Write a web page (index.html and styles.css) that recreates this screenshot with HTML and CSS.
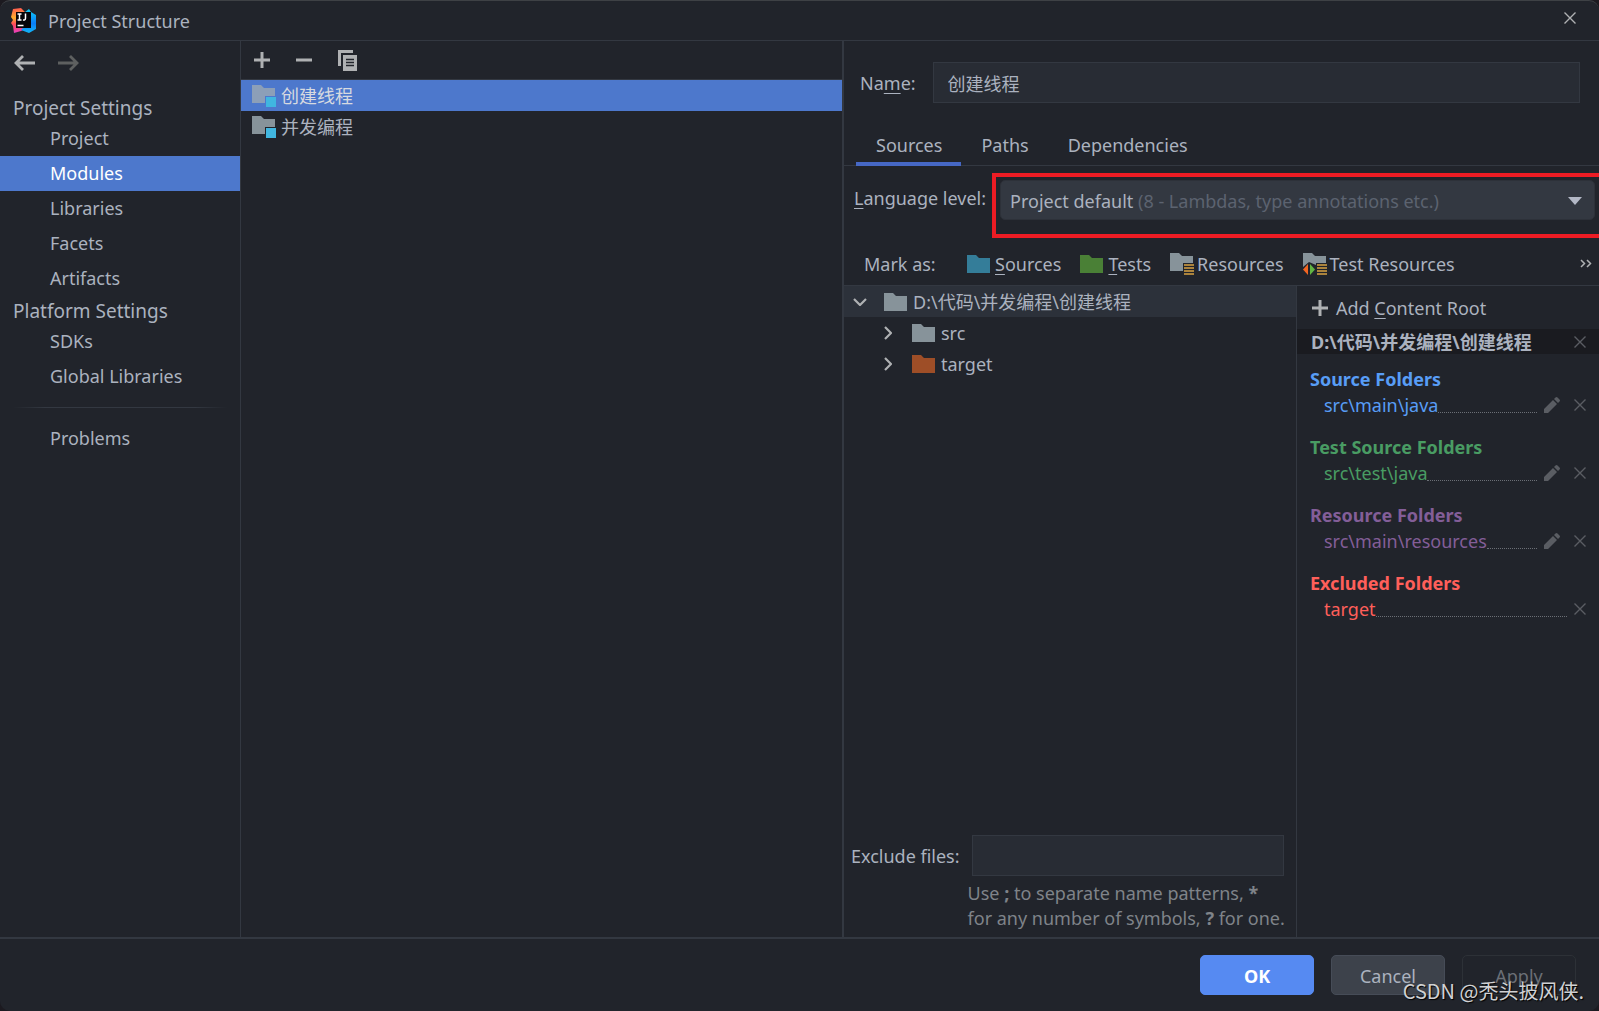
FILE: index.html
```html
<!DOCTYPE html>
<html lang="en">
<head>
<meta charset="utf-8">
<title>Project Structure</title>
<link rel="stylesheet" href="styles.css">
</head>
<body>
<svg class="defs" aria-hidden="true">
  <symbol id="folder" viewBox="0 0 23 18"><path d="M0 0H9L12 3H23V18H0Z" fill="currentColor"/></symbol>
  <symbol id="cross" viewBox="0 0 12 12"><path d="M.5 .5L11.500 11.500M11.500 .5L.5 11.500" stroke="currentColor" stroke-width="1.400" fill="none"/></symbol>
  <symbol id="plus" viewBox="0 0 16 16"><path d="M8 0V16M0 8H16" stroke="currentColor" stroke-width="3" fill="none"/></symbol>
  <symbol id="pencil" viewBox="0 0 16 16"><path d="M0 12L9 3L13 7L4 16H0ZM10 2L11.500 .5Q12.500 -.5 13.500 .5L15.500 2.500Q16.500 3.500 15.500 4.500L14 6Z" fill="currentColor"/></symbol>
  <symbol id="chevron" viewBox="0 0 8 14"><path d="M1 1L7 7L1 13" stroke="currentColor" stroke-width="2.200" fill="none"/></symbol>
  <symbol id="module" viewBox="0 0 24 22"><path d="M0 0H9L12 3H23V11H13V18H0Z" fill="currentColor"/><path d="M14 12H24V22H14Z" fill="#40b6e0"/></symbol>
</svg>
<div class="dialog">
  <header class="titlebar">
    <svg class="logo" viewBox="0 0 26 26" aria-hidden="true">
      <defs>
        <linearGradient id="warm" x1="0" y1="0" x2="0" y2="1"><stop offset="0" stop-color="#ff5a4f"/><stop offset=".4" stop-color="#fdb02c"/><stop offset=".65" stop-color="#fb4a5c"/><stop offset="1" stop-color="#e93fc0"/></linearGradient>
        <linearGradient id="cool" x1="0" y1="0" x2="0" y2="1"><stop offset="0" stop-color="#10d0f5"/><stop offset=".6" stop-color="#0a7dfa"/><stop offset="1" stop-color="#12b7f5"/></linearGradient>
      </defs>
      <path d="M2 1L10 0L16 6V20L10 23L3 25L2 18L0 15L2 12L0 9Z" fill="url(#warm)"/>
      <path d="M14 4L18 1L20 4L25 7L25 21L18 25L10 22L14 18Z" fill="url(#cool)"/>
      <path d="M5 4H20V20H5Z" fill="#050509"/>
      <path d="M6.500 6H10.500M8.500 6V12M6.500 12H10.500M12 12Q14.500 12.500 14.500 10V5.500M6.500 17.500H12.500" stroke="#fff" stroke-width="1.500" fill="none"/>
    </svg>
    <h1 class="title">Project Structure</h1>
    <button class="icon-button close" aria-label="Close"><svg class="cross"><use href="#cross"/></svg></button>
  </header>
  <main class="content">
    <nav class="sidebar">
      <div class="history">
        <button class="icon-button" aria-label="Back"><svg class="arrow" viewBox="0 0 21 16"><path d="M9 1L2 8L9 15M2 8H21" stroke="currentColor" stroke-width="2.800" fill="none"/></svg></button>
        <button class="icon-button" aria-label="Forward" disabled><svg class="arrow" viewBox="0 0 21 16"><path d="M12 1L19 8L12 15M19 8H0" stroke="currentColor" stroke-width="2.800" fill="none"/></svg></button>
      </div>
      <h2 class="group">Project Settings</h2>
      <a class="nav-item" href="#">Project</a>
      <a class="nav-item selected" href="#">Modules</a>
      <a class="nav-item" href="#">Libraries</a>
      <a class="nav-item" href="#">Facets</a>
      <a class="nav-item" href="#">Artifacts</a>
      <h2 class="group">Platform Settings</h2>
      <a class="nav-item" href="#">SDKs</a>
      <a class="nav-item" href="#">Global Libraries</a>
      <hr class="separator">
      <a class="nav-item" href="#">Problems</a>
    </nav>
    <section class="modules">
      <div class="toolbar">
        <button class="icon-button" aria-label="Add"><svg class="plus"><use href="#plus"/></svg></button>
        <button class="icon-button" aria-label="Remove"><svg class="plus" viewBox="0 0 16 16"><path d="M0 8H16" stroke="currentColor" stroke-width="3"/></svg></button>
        <button class="icon-button" aria-label="Copy"><svg class="copy" viewBox="0 0 20 21"><path d="M0 0H15V3H3V16H0Z" fill="currentColor"/><path d="M5 5H19V21H5Z" fill="currentColor"/><path d="M8 9.500H16M8 12.500H16M8 15.500H16" stroke="#21242b" stroke-width="1.300"/></svg></button>
      </div>
      <ul class="module-list">
        <li class="module selected"><svg class="module-icon"><use href="#module"/></svg>创建线程</li>
        <li class="module"><svg class="module-icon"><use href="#module"/></svg>并发编程</li>
      </ul>
    </section>
    <section class="editor">
      <div class="name-row">
        <label for="name">Na<u>m</u>e:</label>
        <input class="field" id="name" type="text" value="创建线程">
      </div>
      <div class="tabs" role="tablist">
        <button class="tab active" role="tab" aria-selected="true">Sources</button>
        <button class="tab" role="tab">Paths</button>
        <button class="tab" role="tab">Dependencies</button>
      </div>
      <div class="level-row">
        <label for="level"><u>L</u>anguage level:</label>
        <div class="highlight">
          <div class="combo">
            <select id="level"><button><selectedcontent></selectedcontent></button><option>Project default <span class="hint">(8 - Lambdas, type annotations etc.)</span></option></select>
          </div>
        </div>
      </div>
      <div class="mark-row">
        <span class="mark-label">Mark as:</span>
        <button class="mark"><svg class="folder blue"><use href="#folder"/></svg><span><u>S</u>ources</span></button>
        <button class="mark"><svg class="folder green"><use href="#folder"/></svg><span><u>T</u>ests</span></button>
        <button class="mark tight"><svg class="mark-icon" viewBox="0 0 24 22"><path d="M0 0H9L12 3H23V10H13V18H0Z" fill="#87939a"/><path d="M14 12H24M14 15H24M14 18H24M14 21H24" stroke="#d9a343" stroke-width="1.600"/></svg><span>Resources</span></button>
        <button class="mark tight"><svg class="mark-icon" viewBox="0 0 24 22"><path d="M0 0H9L12 3H23V10H13V12L6 9L0 14Z" fill="#87939a"/><path d="M5 11V22L0 16.500Z" fill="#f26522"/><path d="M7 11V22L12 16.500Z" fill="#62b543"/><path d="M14 12H24M14 15H24M14 18H24M14 21H24" stroke="#d9a343" stroke-width="1.600"/></svg><span>Test Resources</span></button>
        <button class="icon-button more" aria-label="More"><svg class="more-icon" viewBox="0 0 12 9"><path d="M1 1L4.500 4.500L1 8M7 1L10.500 4.500L7 8" stroke="currentColor" stroke-width="1.500" fill="none"/></svg></button>
      </div>
      <div class="split">
        <div class="tree-pane">
          <ul class="tree">
            <li class="node root"><svg class="chevron open"><use href="#chevron"/></svg><svg class="folder"><use href="#folder"/></svg>D:\代码\并发编程\创建线程</li>
            <li class="node"><svg class="chevron"><use href="#chevron"/></svg><svg class="folder"><use href="#folder"/></svg>src</li>
            <li class="node"><svg class="chevron"><use href="#chevron"/></svg><svg class="folder rust"><use href="#folder"/></svg>target</li>
          </ul>
          <div class="exclude">
            <label for="exclude">Exclude files:</label>
            <input class="field" id="exclude" type="text">
            <p class="help">Use <b>;</b> to separate name patterns, <b>*</b><br>for any number of symbols, <b>?</b> for one.</p>
          </div>
        </div>
        <aside class="roots">
          <button class="add-root"><svg class="plus"><use href="#plus"/></svg><span>Add <u>C</u>ontent Root</span></button>
          <div class="root-path"><strong>D:\代码\并发编程\创建线程</strong><button class="icon-button" aria-label="Remove root"><svg class="cross"><use href="#cross"/></svg></button></div>
          <section class="folders sources">
            <h3>Source Folders</h3>
            <div class="entry"><span>src\main\java</span><i class="leader"></i><button class="icon-button" aria-label="Edit"><svg class="pencil"><use href="#pencil"/></svg></button><button class="icon-button" aria-label="Remove"><svg class="cross"><use href="#cross"/></svg></button></div>
          </section>
          <section class="folders tests">
            <h3>Test Source Folders</h3>
            <div class="entry"><span>src\test\java</span><i class="leader"></i><button class="icon-button" aria-label="Edit"><svg class="pencil"><use href="#pencil"/></svg></button><button class="icon-button" aria-label="Remove"><svg class="cross"><use href="#cross"/></svg></button></div>
          </section>
          <section class="folders resources">
            <h3>Resource Folders</h3>
            <div class="entry"><span>src\main\resources</span><i class="leader"></i><button class="icon-button" aria-label="Edit"><svg class="pencil"><use href="#pencil"/></svg></button><button class="icon-button" aria-label="Remove"><svg class="cross"><use href="#cross"/></svg></button></div>
          </section>
          <section class="folders excluded">
            <h3>Excluded Folders</h3>
            <div class="entry"><span>target</span><i class="leader"></i><button class="icon-button" aria-label="Remove"><svg class="cross"><use href="#cross"/></svg></button></div>
          </section>
        </aside>
      </div>
    </section>
  </main>
  <footer class="footer">
    <button class="button primary">OK</button>
    <button class="button">Cancel</button>
    <button class="button" disabled>Apply</button>
    <span class="watermark">CSDN @秃头披风侠.</span>
  </footer>
</div>
</body>
</html>
```
FILE: styles.css
```css
* { box-sizing: border-box; }

:root {
  --bg: #21242b;
  --line: #333841;
  --text: #abb2bf;
  --select: #4d78cc;
}

body {
  margin: 0;
  background: #1c1a20;
  color: var(--text);
  font: 18px/24px "Noto Sans", "Noto Sans CJK SC", sans-serif;
}

h1, h2, h3, p, ul { margin: 0; padding: 0; font-size: inherit; font-weight: 400; }
ul { list-style: none; }
a { color: inherit; text-decoration: none; }
button, input, select { font: inherit; color: inherit; }
button { padding: 0; border: 0; background: none; white-space: nowrap; }
svg { display: block; flex: none; }
u { text-underline-offset: 3px; text-decoration-thickness: 1px; text-decoration-skip-ink: none; }

.defs { position: absolute; width: 0; height: 0; }

.dialog {
  display: flex;
  flex-direction: column;
  min-height: 100vh;
  background: var(--bg);
  border-top: 1px solid #3e4145;
  border-radius: 10px;
  overflow: hidden;
}

.icon-button { display: flex; align-items: center; justify-content: center; color: #afb1b3; }
.icon-button:disabled { color: #5e6060; }
.cross { width: 12px; height: 12px; }
.plus { width: 16px; height: 16px; color: #afb1b3; }
.pencil { width: 16px; height: 16px; }
.folder { width: 23px; height: 18px; color: #87939a; }
.blue { color: #347d99; }
.green { color: #4a8036; }
.rust { color: #9e4e27; }

.titlebar { display: flex; align-items: center; height: 40px; padding: 0 22px 0 11px; border-bottom: 1px solid var(--line); }
.logo { width: 26px; height: 26px; }
.title { margin-left: 11px; }
.close { margin-left: auto; width: 14px; height: 34px; align-self: flex-start; }

.content { display: grid; grid-template-columns: 241px minmax(0, 601fr) minmax(0, 757fr); flex: 1; }

.sidebar { border-right: 1px solid var(--line); }
.history { display: flex; gap: 23px; height: 52px; padding: 14px 0 22px 14px; }
.arrow { width: 21px; height: 16px; }
.group { height: 28px; padding: 3px 13px 1px; font-size: 19px; }
.nav-item { display: block; height: 35px; padding: 5px 50px; }
.nav-item.selected { background: var(--select); color: #fff; }
.separator { height: 1px; margin: 13px; border: 0; background: linear-gradient(90deg, transparent, var(--line) 15%, var(--line) 85%, transparent); }

.toolbar { display: flex; align-items: center; gap: 26px; height: 39px; padding: 0 13px; border-bottom: 1px solid var(--line); }
.toolbar .copy { width: 20px; height: 21px; }
.module { display: flex; align-items: center; height: 31px; padding: 0 11px; gap: 5px; }
.module.selected { background: var(--select); color: #d7dae0; }
.module-icon { width: 24px; height: 22px; color: #87939a; }
.module.selected .module-icon { color: #8c9fb8; }

.editor { display: flex; flex-direction: column; border-left: 2px solid var(--line); }
.name-row { display: flex; align-items: center; gap: 17px; padding: 21px 19px 0 16px; }
.field { flex: 1; min-width: 0; height: 41px; padding: 0 14px; border: 1px solid var(--line); background: #282c34; }
.tabs { display: flex; height: 45px; margin-top: 18px; padding-left: 12px; border-bottom: 1px solid var(--line); }
.tab { height: 45px; padding: 7px 19px 0 20px; border-bottom: 4px solid transparent; }
.tab.active { border-color: #4668c5; }

.level-row { display: flex; align-items: flex-start; gap: 6px; padding: 7px 0 0 10px; }
.level-row label { padding-top: 13px; white-space: nowrap; }
.highlight { flex: 1; min-width: 0; height: 65px; padding: 3px 4px; border: 4px solid #ed1c24; border-right: 0; }
.combo select {
  appearance: base-select;
  display: flex;
  align-items: center;
  width: 100%;
  height: 40px;
  padding: 2px 12px 0 9px;
  border: 1px solid #2d3139;
  border-radius: 5px;
  background: #333841;
}
.combo select::picker-icon { content: ""; width: 14px; height: 8px; margin-left: auto; background: #b3b8c6; clip-path: polygon(0 0, 100% 0, 50% 100%); }
.hint { color: #5c6370; }

.mark-row { display: flex; align-items: center; height: 48px; padding: 4px 7px 0 20px; border-bottom: 1px solid var(--line); }
.mark-label { width: 103px; }
.mark { display: flex; align-items: center; gap: 5px; margin-right: 19px; }
.mark.tight { gap: 3px; }
.mark-icon { width: 24px; height: 22px; }
.more { margin-left: auto; }
.more-icon { width: 12px; height: 9px; }

.split { display: grid; grid-template-columns: minmax(0, 453fr) minmax(0, 302fr); flex: 1; }
.tree-pane { display: flex; flex-direction: column; justify-content: space-between; border-right: 1px solid var(--line); }
.node { display: flex; align-items: center; height: 31px; padding-left: 40px; gap: 6px; }
.node.root { padding-left: 12px; background: #2c313a; }
.chevron { width: 8px; height: 14px; margin-right: 14px; color: #afb1b3; }
.chevron.open { transform: rotate(90deg); }

.exclude { display: grid; grid-template-columns: auto minmax(0, 1fr); align-items: center; column-gap: 12px; padding: 0 12px 6px 7px; }
.help { grid-column: 2; margin: 5px -12px 0 -4px; color: #7f8389; line-height: 25px; white-space: nowrap; }

.add-root { display: flex; align-items: center; gap: 8px; height: 43px; padding-left: 15px; }
.root-path { display: flex; align-items: center; justify-content: space-between; height: 25px; padding: 0 13px 0 14px; background: #1a1b20; }
.roots .icon-button { color: #5a5d63; }
.folders { height: 68px; padding: 13px 13px 0 13px; }
.folders h3 { font-weight: 700; }
.entry { display: flex; align-items: center; height: 28px; padding-left: 14px; }
.entry .leader { flex: 1; height: 16px; border-bottom: 1px dotted #6b6f76; }
.entry .icon-button { margin-left: 7px; }
.entry .pencil { margin-right: 7px; }
.sources { color: #589df6; }
.tests { color: #499c63; }
.resources { color: #835e98; }
.excluded { color: #ff5f5a; }

.footer { position: relative; display: flex; justify-content: flex-end; gap: 17px; height: 74px; padding: 16px 23px; border-top: 2px solid var(--line); }
.button { width: 114px; height: 40px; padding-top: 2px; border: 1px solid #464c57; border-radius: 5px; background: #3d424b; }
.button.primary { border-color: #568af2; background: #568af2; color: #fff; font-weight: 700; }
.button:disabled { border-color: #2d3137; background: none; color: #6b6f76; }
.watermark { position: absolute; right: 15px; bottom: 8px; color: #d0d1d3; font-family: "Noto Sans CJK SC", sans-serif; font-size: 20px; text-shadow: 1px 1px 1px #000; }
```
